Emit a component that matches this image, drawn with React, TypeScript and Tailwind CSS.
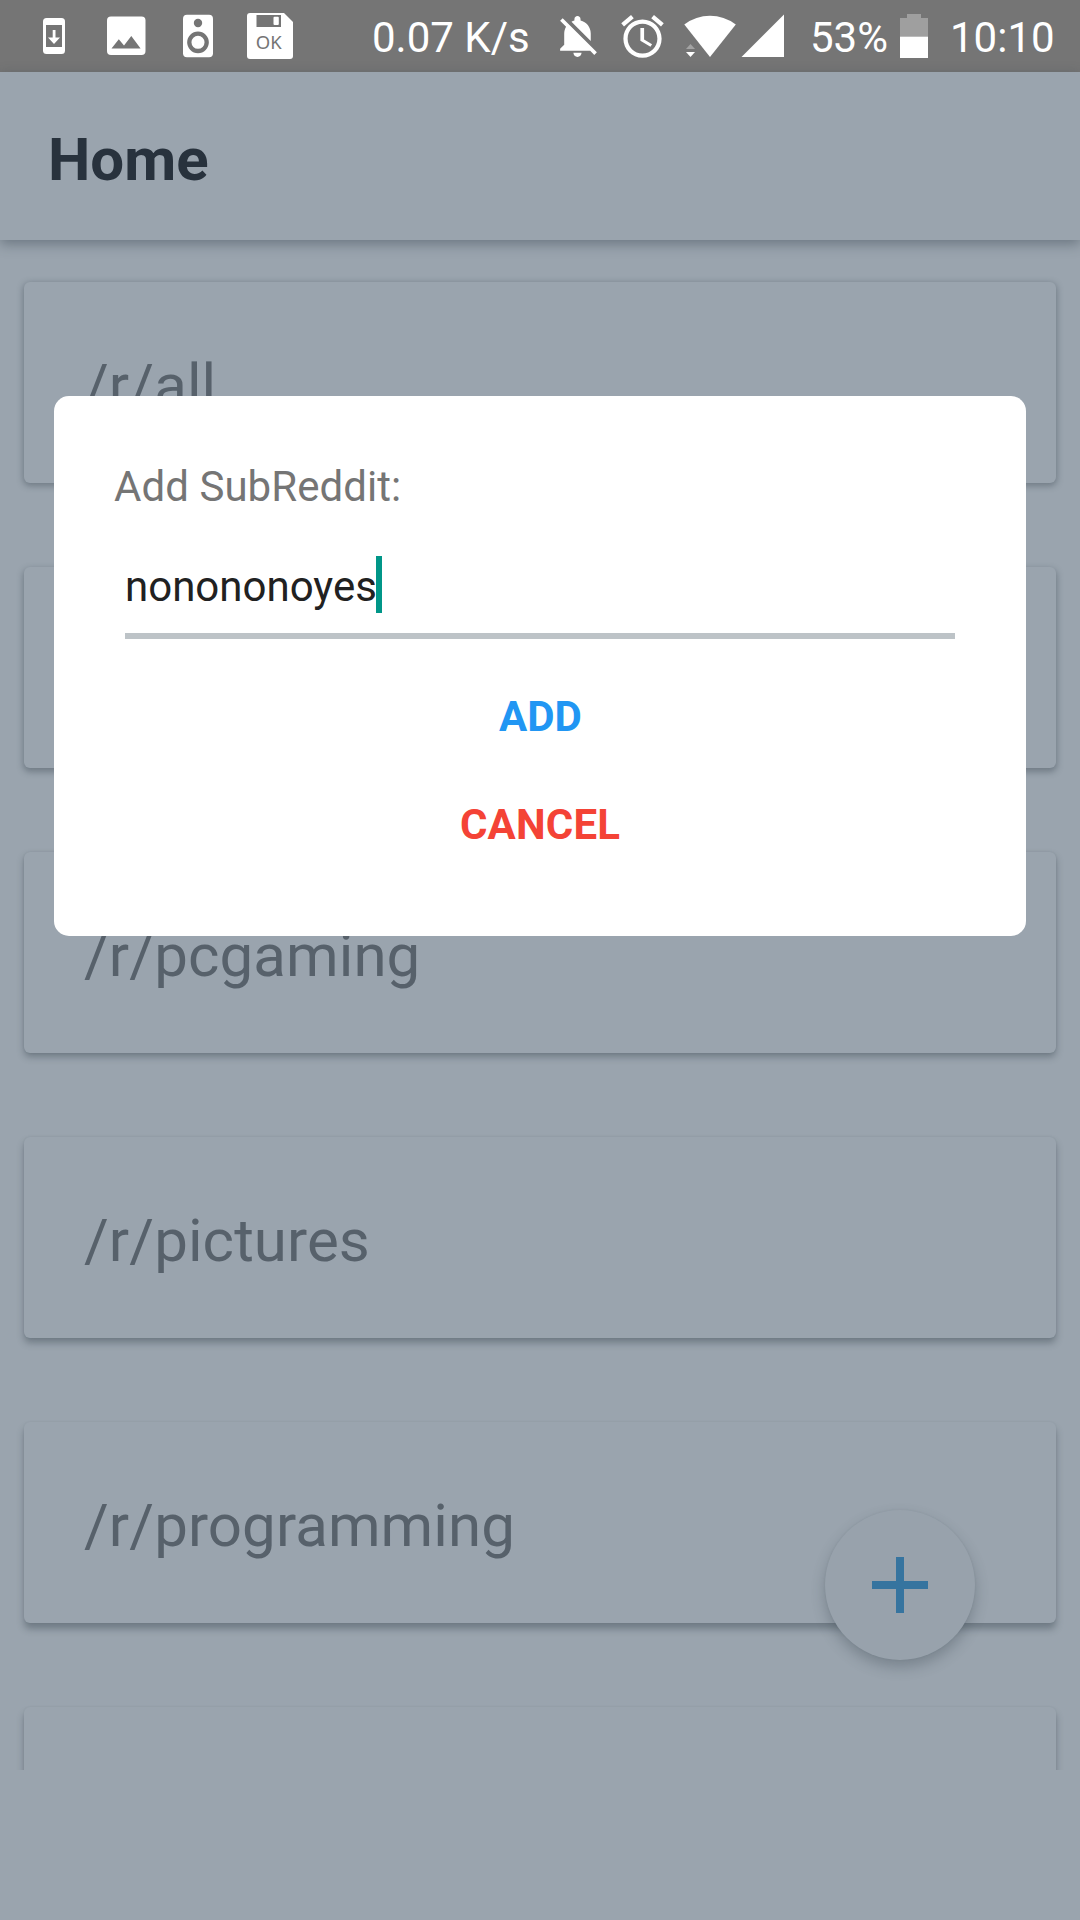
import type { ReactNode } from "react";

const subreddits = [
  { id: 1, name: "/r/all", shadow: "shadow-[0_2px_6px_1px_rgba(52,64,76,0.4)]" },
  { id: 2, name: "", shadow: "shadow-[0_3px_6px_1px_rgba(52,64,76,0.4)]" },
  { id: 3, name: "/r/pcgaming", shadow: "shadow-[0_4px_7px_0px_rgba(52,64,76,0.4),0_0_2px_0px_rgba(52,64,76,0.15)]" },
  { id: 4, name: "/r/pictures", shadow: "shadow-[0_5px_7px_0px_rgba(52,64,76,0.4),0_0_2px_0px_rgba(52,64,76,0.12)]" },
  { id: 5, name: "/r/programming", shadow: "shadow-[0_6px_7px_0px_rgba(52,64,76,0.4),0_0_2px_0px_rgba(52,64,76,0.08)]" },
  { id: 6, name: "", shadow: "shadow-[0_6px_7px_0px_rgba(52,64,76,0.4),0_0_2px_0px_rgba(52,64,76,0.08)]" },
];

type GlyphProps = { box: string; className: string; children: ReactNode };

function Glyph({ box, className, children }: GlyphProps) {
  return (
    <svg viewBox={box} className={`block shrink-0 ${className}`} fill="#fff">
      {children}
    </svg>
  );
}

function StatusBar() {
  return (
    <div className="flex h-[72px] shrink-0 items-start bg-[#757575] text-[42px] leading-[75px] whitespace-nowrap text-white">
      <Glyph box="0 0 22 72" className="ml-[43px] h-[72px] w-[22px]">
        <rect x="0" y="18" width="22" height="36" rx="3.5" />
        <rect x="3" y="25" width="16" height="22" fill="#757575" />
        <path d="M9.7 30h2.8v7.6H17L11 44l-6-6.400h4.700z" />
      </Glyph>
      <Glyph box="0 0 40 72" className="ml-[42px] h-[72px] w-[40px]">
        <rect x="0" y="16.500" width="38.500" height="38.500" rx="4" />
        <path d="M4.500 48.500l7.300-9.300 5.200 6.300 7.300-9.500 9.300 12.500z" fill="#757575" />
      </Glyph>
      <Glyph box="0 0 30 72" className="ml-[36px] h-[72px] w-[30px]">
        <rect x="0" y="14.700" width="30" height="42.500" rx="4" />
        <circle cx="15" cy="23" r="4.200" fill="#757575" />
        <circle cx="15" cy="42.300" r="8.700" fill="none" stroke="#757575" strokeWidth="4.300" />
      </Glyph>
      <Glyph box="0 0 46 72" className="ml-[34px] h-[72px] w-[46px]">
        <path d="M3 13h34l9 9v34a3 3 0 0 1-3 3H3a3 3 0 0 1-3-3V16a3 3 0 0 1 3-3z" />
        <rect x="9.500" y="15" width="24.500" height="12" fill="#757575" />
        <rect x="26.500" y="16.700" width="5.300" height="8.300" rx="1" />
        <text x="21.700" y="49.300" textAnchor="middle" fill="#757575" fontFamily="Noto Sans, sans-serif" fontSize="18.500">
          OK
        </text>
      </Glyph>
      <span className="ml-[79px] w-[160px]">0.07 K/s</span>
      <Glyph box="0 0 24 24" className="mt-[12px] ml-[22px] h-[49px] w-[49px]">
        <path d="M11.500 22c1.100 0 2-.9 2-2h-4c0 1.100.9 2 2 2zM18 10.500c0-3.070-2.130-5.640-5-6.320V3.500c0-.83-.67-1.500-1.500-1.500S10 2.670 10 3.500v.68c-.51.12-.99.32-1.450.56L18 14.180V10.500zm-.27 8.500l2 2L21 19.730 4.270 3 3 4.270l2.920 2.920C5.340 8.160 5 9.290 5 10.500V16l-2 2v1h14.730z" />
      </Glyph>
      <Glyph box="0 0 24 24" className="mt-[11px] ml-[14px] h-[51px] w-[51px]">
        <path d="M22 5.720l-4.600-3.860-1.290 1.530 4.600 3.860L22 5.720zM7.880 3.390L6.600 1.860 2 5.710l1.290 1.530 4.590-3.850zM12.500 8H11v6l4.750 2.850.75-1.230-3.750-2.220V8zM12 4c-4.970 0-9 4.030-9 9s4.020 9 9 9c4.970 0 9-4.030 9-9s-4.030-9-9-9zm0 16c-3.870 0-7-3.130-7-7s3.130-7 7-7 7 3.130 7 7-3.130 7-7 7z" />
      </Glyph>
      <Glyph box="0 0 52 72" className="ml-[16px] h-[72px] w-[52px]">
        <path d="M0.300 24.500Q12 15.800 26 15.800T51.800 24.500L26 57z" />
        <path d="M2 49l4.500-5 4.500 5z" fill="#a3a3a3" />
        <path d="M2 52h9l-4.500 5z" />
      </Glyph>
      <Glyph box="0 0 43 72" className="ml-[5px] h-[72px] w-[43px]">
        <path d="M0.500 57L43 14.500V57z" />
      </Glyph>
      <span className="ml-[26px] w-[80px]">53%</span>
      <Glyph box="0 0 28 72" className="ml-[10px] h-[72px] w-[28px]">
        <path d="M0 37V18h7v-4h14v4h7v19z" fill="#9f9f9f" />
        <path d="M0 36.700h28V58H0z" />
      </Glyph>
      <span className="ml-[22px]">10:10</span>
    </div>
  );
}

function SubredditCard({ name, shadow }: { name: string; shadow: string }) {
  return (
    <div className={`h-[201px] shrink-0 rounded-[6px] bg-[#9aa4ae] px-[60px] pt-[68px] text-[60px] leading-[72px] tracking-[0.1px] text-[#57616b] ${shadow}`}>
      {name}
    </div>
  );
}

function AddDialog() {
  return (
    <div className="absolute inset-0 flex flex-col items-center pt-[396px]">
      <div className="flex h-[540px] w-[972px] flex-col rounded-[15px] bg-white px-[60px] pt-[61px] text-[42px]">
        <div className="leading-[60px] tracking-[0.05px] text-[#757575]">Add SubReddit:</div>
        <div className="mx-[11px] mt-[39px] flex h-[83px] border-b-[6px] border-[#bdc3c7] text-[#212121]">
          <span className="mt-[2px] leading-[58px]">nonononoyes</span>
          <span className="-ml-[1px] h-[57px] w-[6px] bg-[#009688]" />
        </div>
        <button className="mt-[48px] pl-[1px] leading-[60px] font-bold text-[#2196f3]">ADD</button>
        <button className="mt-[48px] leading-[60px] font-bold tracking-[0.15px] text-[#f44336]">CANCEL</button>
      </div>
    </div>
  );
}

export default function App() {
  return (
    <div className="relative flex h-[1920px] w-[1080px] flex-col overflow-hidden bg-[#9aa4ae] font-['Roboto',sans-serif]">
      <StatusBar />
      <header className="relative flex h-[168px] shrink-0 items-center bg-[#9aa4ae] px-[48px] pt-[7px] text-[60px] font-bold text-[#28323d] shadow-[0_4px_12px_0px_rgba(52,64,76,0.45)]">
        <h1>Home</h1>
      </header>
      <main className="flex h-[1530px] shrink-0 flex-col gap-[84px] overflow-hidden px-[24px] pt-[42px]">
        {subreddits.map((item) => (
          <SubredditCard key={item.id} name={item.name} shadow={item.shadow} />
        ))}
      </main>
      <button className="absolute top-[1510px] left-[825px] flex size-[150px] items-center justify-center rounded-full bg-[#98a2ac] shadow-[0_7px_14px_0px_rgba(52,64,76,0.32),0_0_2px_0px_rgba(52,64,76,0.1)]">
        <svg viewBox="0 0 56 56" className="size-[56px]" fill="#36749f">
          <path d="M24 0h8v24h24v8H32v24h-8V32H0v-8h24z" />
        </svg>
      </button>
      <AddDialog />
    </div>
  );
}
